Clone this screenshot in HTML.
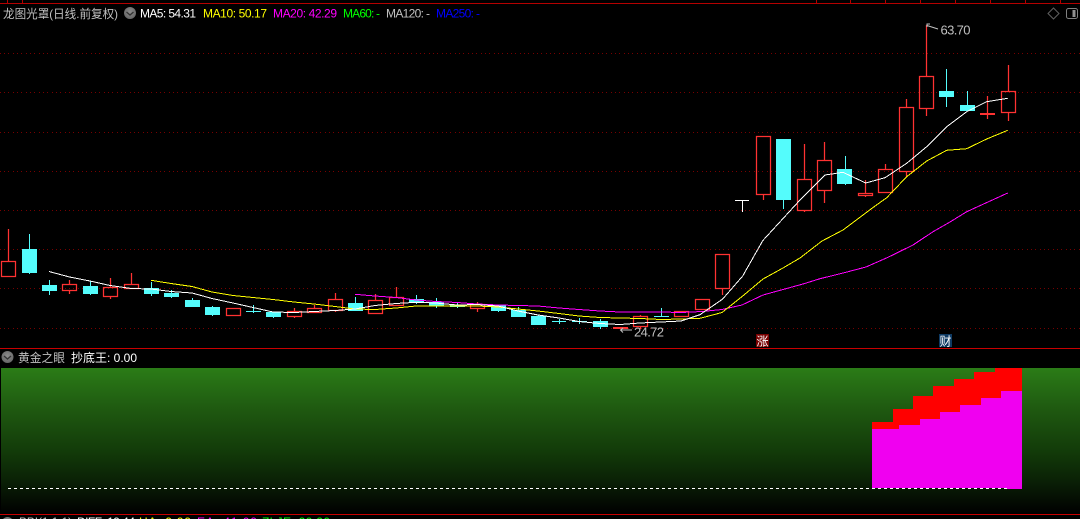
<!DOCTYPE html>
<html><head><meta charset="utf-8"><title>龙图光罩</title>
<style>
html,body{margin:0;padding:0;background:#000;width:1080px;height:519px;overflow:hidden}
svg{display:block;position:absolute;left:0;top:0}
#pane{position:absolute;left:1px;top:368px;width:1079px;height:146px;background:linear-gradient(to bottom,#2b7c17 0%,#1e5710 30%,#123a09 58%,#0a2006 78%,#000 100%)}
text{font-family:"Liberation Sans","WenQuanYi Zen Hei","Noto Sans CJK SC",sans-serif;font-size:12px}
.a{shape-rendering:crispEdges}
</style></head><body>
<div id="pane"></div>
<svg width="1080" height="519" viewBox="0 0 1080 519">
<defs>
<radialGradient id="ic" cx=".5" cy=".4" r=".6"><stop offset="0" stop-color="#8c8c8c"/><stop offset="1" stop-color="#666"/></radialGradient>
</defs>
<rect x="0" y="3" width="1080" height="1" fill="#b40000"/>
<path d="M7.5 0V3M22.5 0V3M816.5 0V3M850.5 0V3M885.5 0V3M920.5 0V3M955.5 0V3M990.5 0V3M1025.5 0V3M1060.5 0V3" stroke="#b40000" fill="none"/>
<path d="M0 53.5H1080M0 92.5H1080M0 132.5H1080M0 171.5H1080M0 210.5H1080M0 249.5H1080M0 288.5H1080M0 328.5H1080" stroke="#780000" stroke-dasharray="1 3 1 3 1 4" fill="none"/>
<rect x="0" y="348" width="1080" height="1" fill="#c80000"/>
<rect x="0" y="514" width="1080" height="1" fill="#c80000"/>

<!-- candles red -->
<g fill="none" stroke="#ff3232" stroke-width="1.25">
<path d="M8.5 229V261M69.5 280V284M69.5 291V294M110.5 278V287M110.5 297V299M131.5 273V284M294.5 308V311M294.5 317V318M314.5 305V308M335.5 293V299M335.5 311V312M375.5 294V300M396.5 287V297M477.5 302V304M477.5 309V312M640.5 315V316M640.5 327V329M722.5 289V295M763.5 195V200M804.5 144V179M804.5 211V212M824.5 142V160M824.5 191V203M865.5 180V193M865.5 196V197M885.5 164V169M906.5 99V107M906.5 172V177M926.5 25V76M926.5 109V116M987.5 96V119M1008.5 65V91M1008.5 113V121"/>
<rect x="1.5" y="261.5" width="14" height="15"/>
<rect x="62.5" y="284.5" width="14" height="6"/>
<rect x="103.5" y="287.5" width="14" height="9"/>
<rect x="124.5" y="284.5" width="14" height="4"/>
<rect x="226.5" y="308.5" width="14" height="7"/>
<rect x="287.5" y="311.5" width="14" height="5"/>
<rect x="307.5" y="308.5" width="14" height="4"/>
<rect x="328.5" y="299.5" width="14" height="11"/>
<rect x="368.5" y="300.5" width="14" height="13"/>
<rect x="389.5" y="297.5" width="14" height="8"/>
<rect x="470.5" y="304.5" width="14" height="4"/>
<rect x="633.5" y="316.5" width="14" height="10"/>
<rect x="674.5" y="311.5" width="14" height="5"/>
<rect x="695.5" y="299.5" width="14" height="10"/>
<rect x="715.5" y="254.5" width="14" height="34"/>
<rect x="756.5" y="136.5" width="14" height="58"/>
<rect x="797.5" y="179.5" width="14" height="31"/>
<rect x="817.5" y="160.5" width="14" height="30"/>
<rect x="858.5" y="193.5" width="14" height="2"/>
<rect x="878.5" y="169.5" width="14" height="23"/>
<rect x="899.5" y="107.5" width="14" height="64"/>
<rect x="919.5" y="76.5" width="14" height="32"/>
<rect x="1001.5" y="91.5" width="14" height="21"/>
</g>
<g fill="#ff3232">
<rect x="613" y="327" width="15" height="2"/>
<rect x="980" y="113" width="15" height="2"/>
</g>
<!-- candles cyan -->
<g fill="#54fcfc">
<path stroke="#54fcfc" fill="none" d="M29.5 234V274M49.5 280V295M90.5 281V295M151.5 282V296M171.5 290V298M192.5 298V301M212.5 306V316M253.5 305V313M273.5 316V318M355.5 297V303M416.5 295V304M436.5 298V308M457.5 303V308M498.5 310V312M518.5 307V310M538.5 315V316M559.5 319V324M579.5 318V324M600.5 319V329M661.5 308V317M783.5 200V209M845.5 156V185M946.5 69V107M967.5 91V105"/>
<rect x="22" y="249" width="15" height="24"/>
<rect x="42" y="285" width="15" height="6"/>
<rect x="83" y="286" width="15" height="8"/>
<rect x="144" y="288" width="15" height="6"/>
<rect x="164" y="293" width="15" height="4"/>
<rect x="185" y="300" width="15" height="7"/>
<rect x="205" y="307" width="15" height="8"/>
<rect x="246" y="311" width="15" height="1"/>
<rect x="266" y="312" width="15" height="5"/>
<rect x="348" y="303" width="15" height="8"/>
<rect x="409" y="299" width="15" height="3"/>
<rect x="429" y="302" width="15" height="4"/>
<rect x="450" y="305" width="15" height="2"/>
<rect x="491" y="305" width="15" height="6"/>
<rect x="511" y="310" width="15" height="7"/>
<rect x="531" y="316" width="15" height="9"/>
<rect x="552" y="321" width="14" height="1"/>
<rect x="572" y="321" width="15" height="1"/>
<rect x="593" y="321" width="15" height="6"/>
<rect x="654" y="316" width="15" height="1"/>
<rect x="776" y="139" width="15" height="61"/>
<rect x="837" y="169" width="15" height="15"/>
<rect x="939" y="91" width="15" height="6"/>
<rect x="960" y="105" width="15" height="6"/>
</g>
<g stroke="#fff" fill="none"><path d="M735 200.5H749M742.5 200V212"/></g>

<!-- MA lines -->
<g fill="none" class="a">
<polyline stroke="#ff00ff" points="355,294.3 375,296 396,297.5 416,300 436,301.5 457,302.5 477,304 498,305 518,305.5 538,306 559,308 579,309.5 600,311 620,312 640,312 661,312 681,312.5 702,311.5 722,309.5 742,305 763,295 783,289.5 803,284 820,278.7 845,272.5 866,267 888,257.3 913,245 933,231.7 950,222 966.7,211.7 1007.7,193"/>
<polyline stroke="#ffff00" points="151,280.3 171,283.5 192,286.5 212,292 233,295.5 253,297.5 273,299.5 294,302 314,304 335,306.5 355,309 375,309.5 396,308 416,306 436,306 457,306 477,306 498,307 518,309 538,311 559,313.5 579,316 600,317.5 620,318 640,318.5 661,319.5 681,319 700,318.3 722,312.5 742.7,296 763,279 783,268 800,258 822,241 843,230 870,209.7 886.7,197.7 906.7,176.7 926.7,161 946.7,150.3 966.7,148.7 986.7,139 1007.7,130.3"/>
<polyline stroke="#ffffff" points="49,271.5 69.5,277 90,281 110,285.5 131,288.5 151,289 171,291.5 192,293 212,298.5 233,303 253,307.5 273,312 294,312.5 314,311.5 335,310.5 355,309 375,305.5 396,303.5 416,302.3 436,303 457,305 477,304.5 498,306 518,311 538,315 559,318 579,321.5 600,323.5 620,324.5 640,323 661,322 681,321 700,314.7 722.7,299 742.7,276 762.7,240.7 800,200 825,175 843,172.3 865.7,183 885,177.7 906.7,163.3 926.7,146.7 946.7,126.7 966.7,111.7 986.7,101.7 1007.7,98.3"/>
</g>

<!-- indicator -->
<path fill="#ff0000" d="M872 422H893V409H913V396H933V386H954V379H974V372H995V368H1022V440H872Z"/>
<path fill="#f000f0" d="M872 429H899V425H920V419H940V412H960V405H981V398H1001V391H1022V489H1007V488H872Z"/>
<path d="M8 488.5H1007" stroke="#fff" stroke-dasharray="3 3" fill="none"/>

<!-- labels -->
<g fill="#c8c8c8">
<text x="3" y="18" textLength="115" lengthAdjust="spacingAndGlyphs" fill="#c0c0c0">龙图光罩(日线.前复权)</text>
<text x="140" y="17.5" textLength="56" fill="#fff">MA5: 54.31</text>
<text x="203" y="17.5" textLength="64" fill="#ffff00">MA10: 50.17</text>
<text x="273" y="17.5" textLength="64" fill="#ff00ff">MA20: 42.29</text>
<text x="343" y="17.5" textLength="37" fill="#00ff00">MA60: -</text>
<text x="386" y="17.5" textLength="44" fill="#c0c0c0">MA120: -</text>
<text x="436" y="17.5" textLength="44" fill="#0000ff">MA250: -</text>
<text x="18" y="362" textLength="47" lengthAdjust="spacingAndGlyphs" fill="#c0c0c0">黄金之眼</text>
<text x="71" y="362" textLength="66" lengthAdjust="spacingAndGlyphs" fill="#fff">抄底王: 0.00</text>
<text x="634" y="336.5" textLength="30" style="font-size:13px" fill="#c0c0c0">24.72</text>
<text x="940.5" y="34.5" textLength="30" style="font-size:13px" fill="#c0c0c0">63.70</text>
<text x="19" y="526" textLength="53" fill="#c0c0c0">BBI(1,1,1)</text>
<text x="77" y="526" textLength="58" fill="#fff">DIFF: 19.44</text>
<text x="139" y="526" textLength="52" fill="#ffff00">HA: 9.99</text>
<text x="197" y="526" textLength="60" fill="#ff00ff">EA: 41.09</text>
<text x="262" y="526" textLength="68" fill="#00ff00">ZLJE: 20.20</text>
</g>
<path d="M632 330H620.5M623 328L620.5 330L623 332.5" fill="none" stroke="#c0c0c0"/>
<path d="M938 29L927 25.5M930 24H927V27" fill="none" stroke="#c0c0c0"/>

<rect x="756" y="334" width="13" height="13" fill="#780000"/>
<rect x="939" y="334" width="13" height="13" fill="#0e3a63"/>
<text x="756.5" y="345.5" fill="#fff" style="font-size:12px">涨</text>
<text x="939.5" y="345.5" fill="#fff" style="font-size:12px">财</text>

<!-- icons -->
<g>
<circle cx="130" cy="13" r="6" fill="url(#ic)"/><path d="M126.5 12L130 15L133.5 12" fill="none" stroke="#333" stroke-width="1.3"/>
<circle cx="7.5" cy="357" r="6" fill="url(#ic)"/><path d="M4 356L7.5 359L11 356" fill="none" stroke="#333" stroke-width="1.3"/>
<circle cx="7.5" cy="523" r="6" fill="url(#ic)"/>
<path d="M1053.5 8L1059 13.5L1053.5 19L1048 13.5Z" fill="none" stroke="#606060"/>
<rect x="1066.5" y="8.5" width="11" height="10" rx="2" fill="none" stroke="#808080"/>
<rect x="1072.5" y="10" width="3" height="7" fill="#909090"/>
</g>
</svg>
</body></html>
